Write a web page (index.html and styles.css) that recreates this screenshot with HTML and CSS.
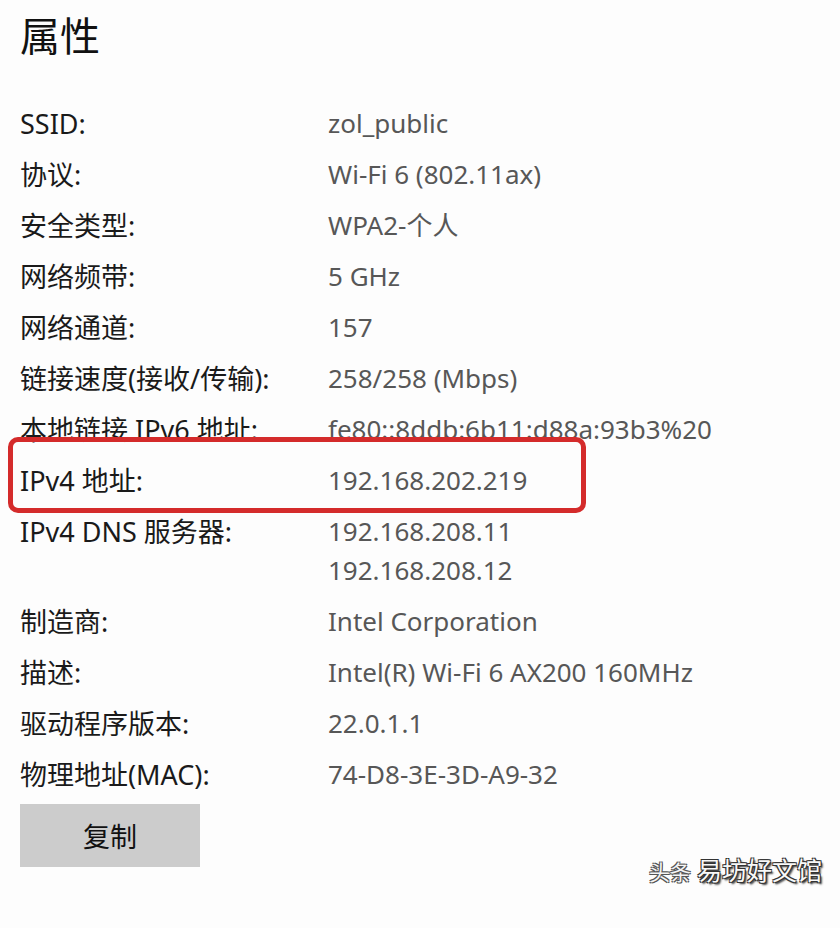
FILE: index.html
```html
<!DOCTYPE html>
<html lang="zh-CN">
<head>
<meta charset="utf-8">
<link rel="stylesheet" href="styles.css">
</head>
<body>
<div class="page">
  <h1 class="title">属性</h1>
  <div class="props">
    <div class="row"><div class="label">SSID:</div><div class="value">zol_public</div></div>
    <div class="row"><div class="label">协议:</div><div class="value">Wi-Fi 6 (802.11ax)</div></div>
    <div class="row"><div class="label">安全类型:</div><div class="value">WPA2-个人</div></div>
    <div class="row"><div class="label">网络频带:</div><div class="value">5 GHz</div></div>
    <div class="row"><div class="label">网络通道:</div><div class="value">157</div></div>
    <div class="row"><div class="label">链接速度(接收/传输):</div><div class="value">258/258 (Mbps)</div></div>
    <div class="row"><div class="label">本地链接 IPv6 地址:</div><div class="value">fe80::8ddb:6b11:d88a:93b3%20</div></div>
    <div class="row highlight"><div class="label">IPv4 地址:</div><div class="value">192.168.202.219</div><div class="redbox"></div></div>
    <div class="row"><div class="label">IPv4 DNS 服务器:</div><div class="value">192.168.208.11<br>192.168.208.12</div></div>
    <div class="row"><div class="label">制造商:</div><div class="value">Intel Corporation</div></div>
    <div class="row"><div class="label">描述:</div><div class="value">Intel(R) Wi-Fi 6 AX200 160MHz</div></div>
    <div class="row"><div class="label">驱动程序版本:</div><div class="value">22.0.1.1</div></div>
    <div class="row"><div class="label">物理地址(MAC):</div><div class="value">74-D8-3E-3D-A9-32</div></div>
  </div>
  <button class="copy">复制</button>
  <div class="watermark"><span class="wm-src">头条</span><span class="wm-name">易坊好文馆</span></div>
</div>
</body>
</html>
```
FILE: styles.css
```css
html, body {
  margin: 0;
  padding: 0;
  background: #fdfdfd;
}
.page {
  position: relative;
  width: 840px;
  height: 928px;
  padding: 0 0 0 20px;
  box-sizing: border-box;
  font-family: "Noto Sans", "Noto Sans CJK SC", sans-serif;
  color: #1a1a1a;
}
.title {
  margin: 0;
  padding-top: 8px;
  font-size: 40px;
  font-weight: normal;
  line-height: 52px;
  font-family: "Noto Sans CJK SC", sans-serif;
  color: #111;
}
.props {
  margin-top: 44px;
  display: flex;
  flex-direction: column;
  gap: 12px;
}
.row {
  position: relative;
  display: grid;
  grid-template-columns: 308px 1fr;
  font-size: 27px;
  line-height: 39px;
}
.label {
  color: #1a1a1a;
}
.value {
  color: #575757;
  font-size: 26px;
}
.redbox {
  position: absolute;
  left: -12px;
  top: -24px;
  width: 578px;
  height: 76px;
  box-sizing: border-box;
  border: 5px solid #d42b2b;
  border-radius: 10px;
}
.copy {
  margin-top: 10px;
  width: 180px;
  height: 63px;
  border: none;
  background: #cccccc;
  font-family: "Noto Sans CJK SC", sans-serif;
  font-size: 27px;
  color: #111;
  padding: 0;
}
.watermark {
  position: absolute;
  right: 18px;
  bottom: 46px;
  font-family: "Noto Sans CJK SC", sans-serif;
  line-height: 1;
  display: flex;
  gap: 6px;
  align-items: baseline;
}
.wm-src {
  color: #f4f4f4;
  text-shadow: -1px -1px 0 #555, 1px -1px 0 #555, -1px 1px 0 #555, 1px 1px 0 #555;
  font-size: 21px;
}
.wm-name {
  color: #f8f8f8;
  font-size: 25px;
  text-shadow: -1px -1px 0 #333, 1px -1px 0 #333, -1px 1px 0 #333, 1px 1px 0 #333, 2px 2px 2px #222;
}
```
